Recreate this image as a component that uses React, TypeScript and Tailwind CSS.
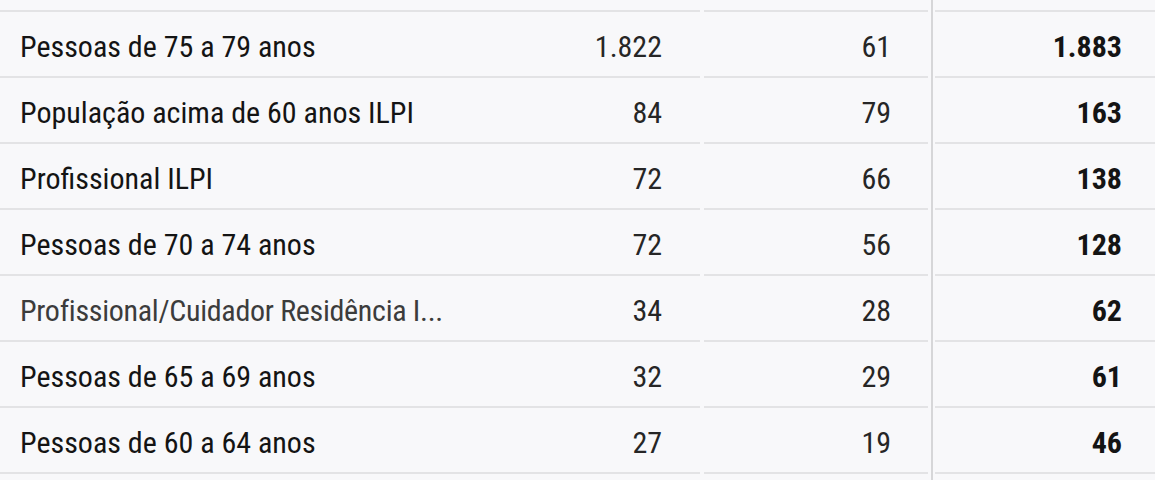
const rows = [
  { label: "Pessoas de 75 a 79 anos", a: "1.822", b: "61", total: "1.883" },
  { label: "População acima de 60 anos ILPI", a: "84", b: "79", total: "163" },
  { label: "Profissional ILPI", a: "72", b: "66", total: "138" },
  { label: "Pessoas de 70 a 74 anos", a: "72", b: "56", total: "128" },
  { label: "Profissional/Cuidador Residência I...", a: "34", b: "28", total: "62", muted: true },
  { label: "Pessoas de 65 a 69 anos", a: "32", b: "29", total: "61" },
  { label: "Pessoas de 60 a 64 anos", a: "27", b: "19", total: "46" },
];

function Divider() {
  return (
    <div className="w-[7px] self-stretch flex justify-center shrink-0">
      <div className="w-[2px] bg-[#d6d6d8]" />
    </div>
  );
}

function Row({ label, a, b, total, muted, spacer }: { label?: string; a?: string; b?: string; total?: string; muted?: boolean; spacer?: boolean }) {
  const h = spacer ? "h-[12px]" : "h-[66px]";
  const cell = "border-b-2 border-[#e3e3e5] flex items-center pt-[5px]";
  return (
    <div className={`flex ${h}`}>
      <div className={`w-[467px] ${cell} pl-5 pr-2 min-w-0`}>
        {label && (
          <span className={`whitespace-nowrap ${muted ? "text-[#3c3c3c] tracking-[-0.3px]" : "text-[#141414]"}`}>{label}</span>
        )}
      </div>
      <div className={`w-[233px] ${cell} justify-end pr-[38px] text-[#262626]`}>{a}</div>
      <div className="w-[4px]" />
      <div className={`w-[224px] ${cell} justify-end pr-[37px] text-[#262626]`}>{b}</div>
      <Divider />
      <div className={`flex-1 ${cell} justify-end pr-[33px] font-bold text-[#141414]`}>{total}</div>
    </div>
  );
}

export default function App() {
  return (
    <div className="w-[1155px] h-[480px] overflow-hidden bg-[#f8f8fa] text-[30px] [font-stretch:82%]" style={{ fontFamily: "Roboto, 'Liberation Sans', sans-serif" }}>
      <Row spacer />
      {rows.map((r) => (
        <Row key={r.label} {...r} />
      ))}
      <div className="flex h-[20px]">
        <div className="w-[928px]" />
        <Divider />
      </div>
    </div>
  );
}
